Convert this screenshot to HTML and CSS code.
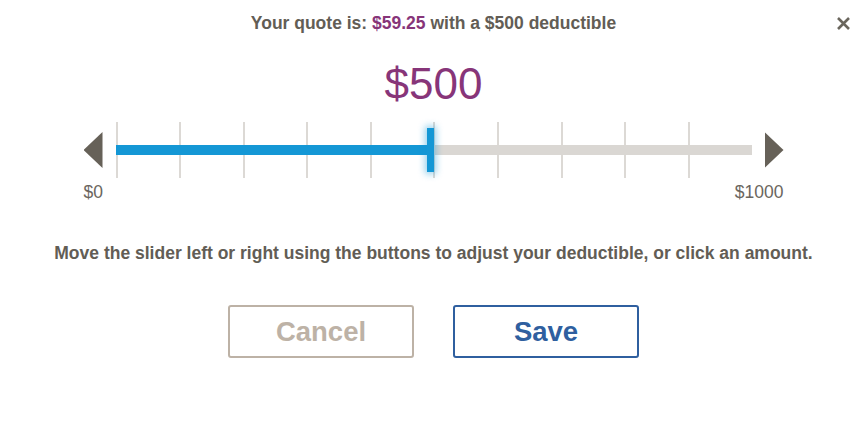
FILE: index.html
```html
<!DOCTYPE html>
<html>
<head>
<meta charset="utf-8">
<link rel="stylesheet" href="styles.css">
</head>
<body>
<div class="dialog">
  <div class="header">
    Your quote is: <span class="price">$59.25</span> with a $500 deductible
    <button class="close" aria-label="Close">
      <svg width="15" height="15" viewBox="0 0 15 15"><path d="M2 2 L13 13 M13 2 L2 13" stroke="#6a665d" stroke-width="2.6" stroke-linecap="butt"/></svg>
    </button>
  </div>
  <div class="amount">$500</div>
  <div class="slider">
    <button class="arrow arrow-left" aria-label="Decrease"></button>
    <div class="track-area">
      <div class="ticks">
        <span></span><span></span><span></span><span></span><span></span>
        <span></span><span></span><span></span><span></span><span></span>
      </div>
      <div class="track"><div class="fill" style="width:50%"></div></div>
      <div class="handle" style="left:calc(50% - 7px)"></div>
    </div>
    <button class="arrow arrow-right" aria-label="Increase"></button>
  </div>
  <div class="labels">
    <span>$0</span>
    <span>$1000</span>
  </div>
  <p class="help">Move the slider left or right using the buttons to adjust your deductible, or click an amount.</p>
  <div class="actions">
    <button class="btn btn-cancel">Cancel</button>
    <button class="btn btn-save">Save</button>
  </div>
</div>
</body>
</html>
```
FILE: styles.css
```css
* { box-sizing: border-box; }
html, body { margin: 0; padding: 0; background: #fff; }
body {
  font-family: "Liberation Sans", Arial, sans-serif;
  color: #625d55;
  width: 867px;
  height: 426px;
  overflow: hidden;
}
.dialog {
  position: relative;
  display: flex;
  flex-direction: column;
  align-items: center;
}
.header {
  width: 100%;
  padding-top: 13px;
  height: 44px;
  line-height: 20px;
  font-size: 17.5px;
  font-weight: bold;
  text-align: center;
  color: #625d55;
}
.price { color: #873579; }
.close {
  position: absolute;
  top: 16px;
  right: 16px;
  width: 15px;
  height: 15px;
  padding: 0;
  border: 0;
  background: none;
  display: block;
}
.close svg { display: block; }
.amount {
  margin-top: 15px;
  font-size: 44px;
  line-height: 50px;
  color: #873579;
}
.slider {
  margin-top: 13px;
  display: flex;
  align-items: center;
  width: 700px;
}
.arrow {
  width: 19px;
  height: 36px;
  border: 0;
  padding: 0;
  background: #666158;
}
.arrow-left {
  clip-path: polygon(100% 0, 0 50%, 100% 100%);
  margin-right: 13px;
}
.arrow-right {
  clip-path: polygon(0 0, 100% 50%, 0 100%);
  margin-left: 13px;
}
.track-area {
  position: relative;
  width: 636px;
  height: 56px;
  display: flex;
  align-items: center;
}
.ticks {
  position: absolute;
  inset: 0;
  display: grid;
  grid-template-columns: repeat(10, 1fr);
}
.ticks span {
  border-left: 2px solid #dcd9d5;
}
.track {
  position: relative;
  width: 100%;
  height: 10px;
  background: #dad7d3;
}
.fill {
  height: 100%;
  background: #1497d5;
}
.handle {
  position: absolute;
  top: 6px;
  width: 7px;
  height: 44px;
  background: #1497d5;
  box-shadow: 0 0 7px 2px rgba(20, 151, 213, 0.45);
}
.labels {
  margin-top: 4px;
  width: 700px;
  display: flex;
  justify-content: space-between;
  font-size: 17.5px;
  line-height: 20px;
  color: #6b665e;
}
.help {
  margin: 41px 0 0;
  font-size: 17.5px;
  line-height: 20px;
  font-weight: bold;
  color: #625d55;
}
.actions {
  margin-top: 42px;
  display: flex;
  gap: 39px;
}
.btn {
  width: 186px;
  height: 53px;
  border-radius: 3px;
  background: #fff;
  font-family: "Liberation Sans", Arial, sans-serif;
  font-size: 27.5px;
  font-weight: bold;
  padding: 0;
}
.btn-cancel {
  border: 2.5px solid #bdb2a6;
  color: #bdb2a6;
}
.btn-save {
  border: 2.5px solid #2f5f9f;
  color: #2f5f9f;
}
```
